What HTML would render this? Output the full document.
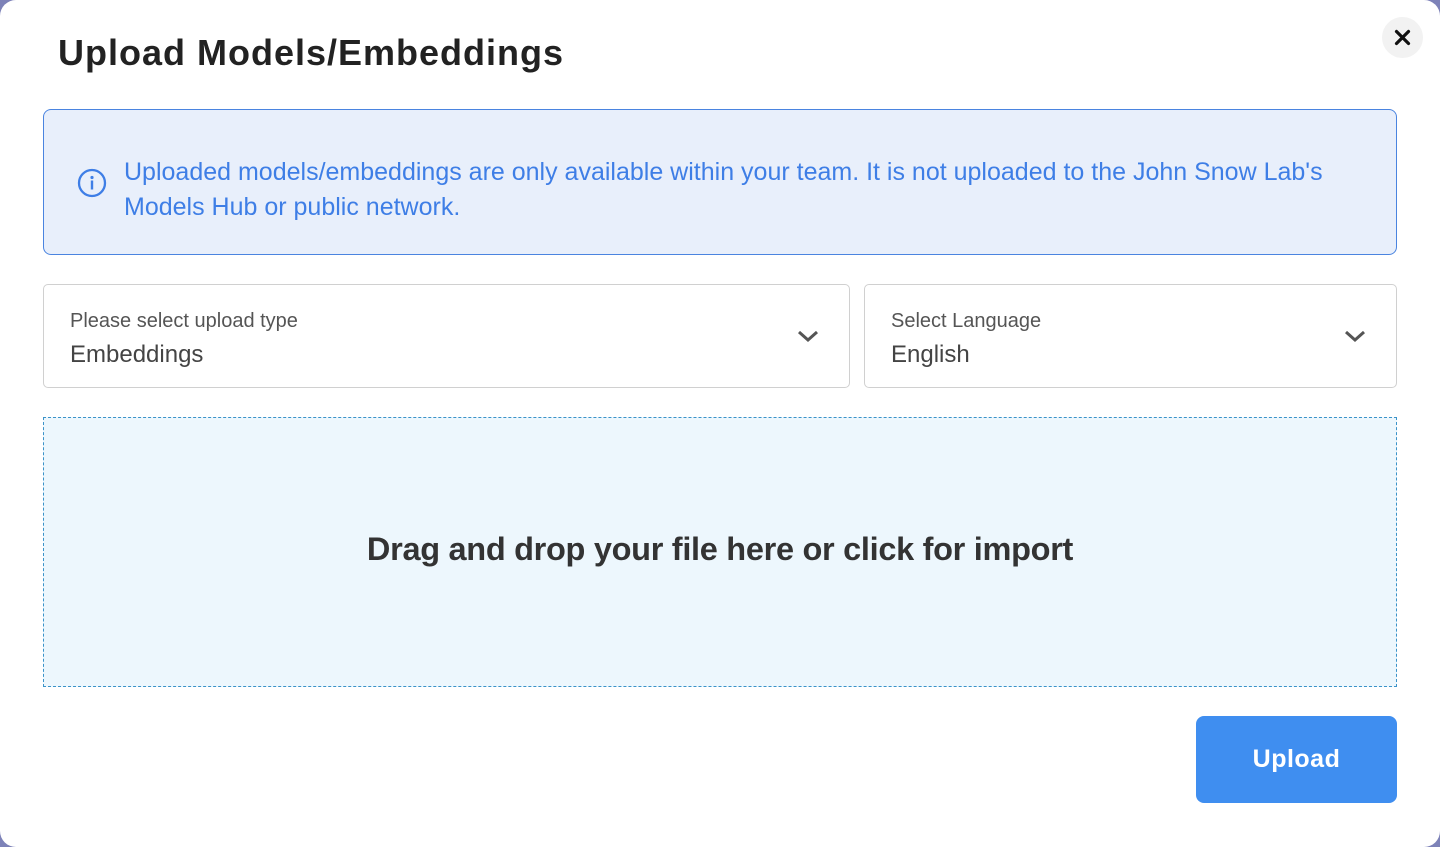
<!DOCTYPE html>
<html><head><style>
html,body{margin:0;padding:0;width:1440px;height:847px;background:#7d82b8;overflow:hidden;font-family:"Liberation Sans",sans-serif}
.m{position:absolute;left:0;top:0;width:1440px;height:847px;background:#fff;border-radius:16px}
h1{position:absolute;left:58px;top:32px;margin:0;font-size:36px;font-weight:bold;color:#222;letter-spacing:1px}
.x{position:absolute;left:1382px;top:17px;width:41px;height:41px;border-radius:50%;background:#f2f2f2}
.info{position:absolute;left:43px;top:109px;width:1354px;height:146px;border:1px solid #4a84e0;border-radius:8px;background:#e8effb;box-sizing:border-box}
.info p{position:absolute;left:80px;top:45px;margin:0;font-size:25px;line-height:35px;color:#3e7ee6;width:1240px;letter-spacing:0px}
.sel{position:absolute;top:284px;height:104px;border:1px solid #d0d0d0;border-radius:5px;box-sizing:border-box}
.sel .l{position:absolute;left:26px;top:25px;font-size:20px;color:#555}
.sel .v{position:absolute;left:26px;top:56px;font-size:24px;color:#444}
.sel svg{position:absolute;top:43px}
.drop{position:absolute;left:43px;top:417px;width:1354px;height:270px;border:1px dashed #3b93c9;background:#edf7fd;box-sizing:border-box;text-align:center;font-size:32.5px;font-weight:bold;color:#333;line-height:262px;letter-spacing:-0.3px}
.btn{position:absolute;left:1196px;top:716px;width:201px;height:87px;border-radius:8px;background:#3f8ef0;color:#fff;font-size:25px;font-weight:bold;text-align:center;line-height:87px;letter-spacing:0.5px}
</style></head><body>
<div class="m">
<h1>Upload Models/Embeddings</h1>
<div class="x"><svg width="41" height="41" viewBox="0 0 41 41"><path d="M14.5 14.5L26.5 26.5M26.5 14.5L14.5 26.5" stroke="#111" stroke-width="3.2" stroke-linecap="round"/></svg></div>
<div class="info">
<svg style="position:absolute;left:33px;top:58px" width="30" height="30" viewBox="0 0 30 30"><circle cx="15" cy="15" r="13" fill="none" stroke="#3e7ee6" stroke-width="2.3"/><circle cx="15" cy="9.5" r="1.6" fill="#3e7ee6"/><rect x="13.8" y="12.5" width="2.4" height="9" fill="#3e7ee6"/></svg>
<p>Uploaded models/embeddings are only available within your team. It is not uploaded to the John Snow Lab's Models Hub or public network.</p>
</div>
<div class="sel" style="left:43px;width:807px"><div class="l">Please select upload type</div><div class="v">Embeddings</div>
<svg style="left:752px" width="24" height="16" viewBox="0 0 24 16"><path d="M3 4l9 8 9-8" fill="none" stroke="#555" stroke-width="3"/></svg></div>
<div class="sel" style="left:864px;width:533px"><div class="l">Select Language</div><div class="v">English</div>
<svg style="left:478px" width="24" height="16" viewBox="0 0 24 16"><path d="M3 4l9 8 9-8" fill="none" stroke="#555" stroke-width="3"/></svg></div>
<div class="drop">Drag and drop your file here or click for import</div>
<div class="btn">Upload</div>
</div>
</body></html>
